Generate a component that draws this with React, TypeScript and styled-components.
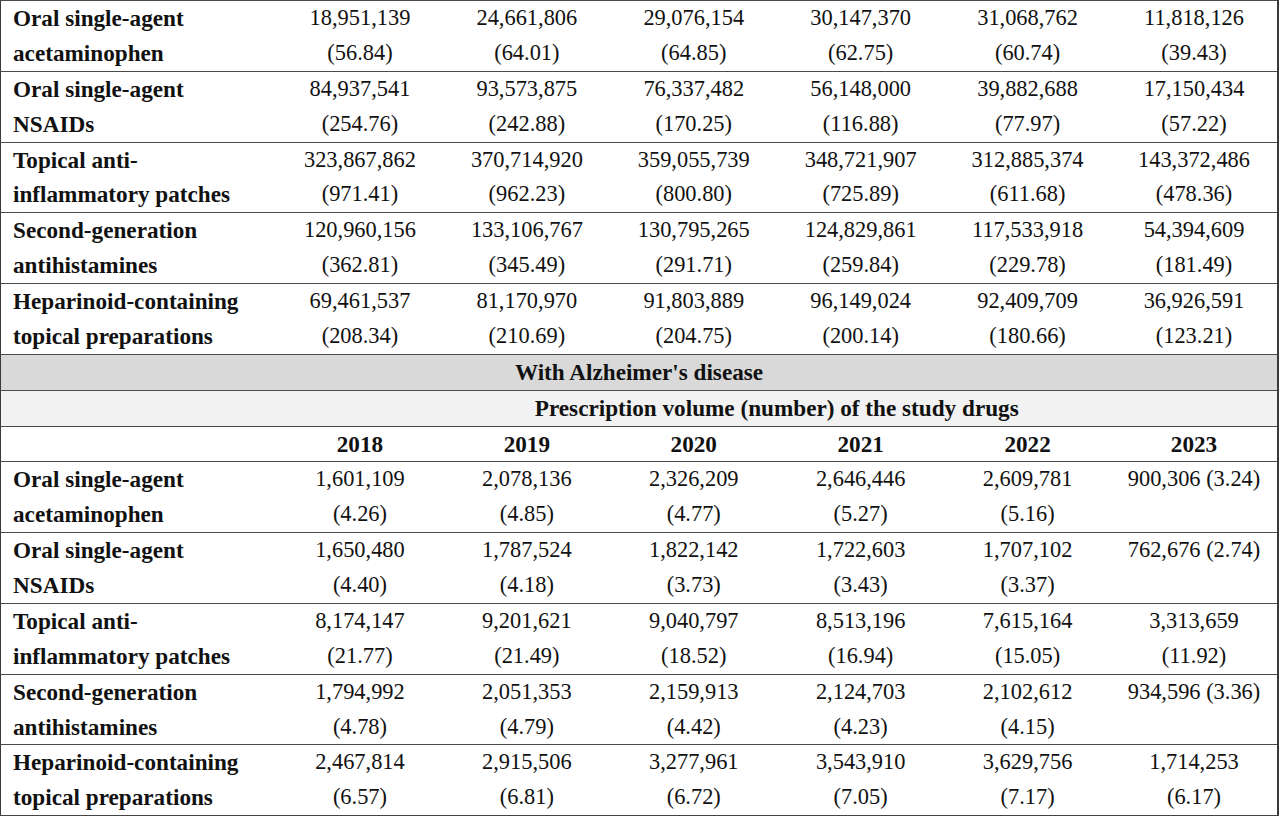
import React from "react";
import styled, { createGlobalStyle } from "styled-components";

const GlobalStyle = createGlobalStyle`
  html, body {
    margin: 0;
    padding: 0;
    background: #ffffff;
  }
  body {
    font-family: "Liberation Serif", "Times New Roman", serif;
    color: #111111;
  }
`;

const Table = styled.table`
  width: 1279px;
  table-layout: fixed;
  border-collapse: collapse;
  font-family: "Liberation Serif", "Times New Roman", serif;
  font-size: 22.4px;
  line-height: 34.87px;
  border-left: 1px solid #3a3a3a;
  border-right: 2px solid #3a3a3a;
  border-bottom: 1px solid #444444;
`;

const Row = styled.tr<{ $band?: "dark" | "light" }>`
  border-top: 1px solid #4a4a4a;
  background: ${(p) =>
    p.$band === "dark" ? "#d9d9d9" : p.$band === "light" ? "#f2f2f2" : "#ffffff"};
`;

const LabelCell = styled.td`
  padding: 0 12px;
  text-align: left;
  vertical-align: top;
  font-weight: 700;
  font-size: 23.2px;
  white-space: nowrap;
`;

const LabelLine = styled.span`
  display: block;
`;

const ValueCell = styled.td`
  padding: 0 11px;
  text-align: center;
  vertical-align: top;
  font-weight: 400;
`;

const HeadCell = styled.td`
  padding: 0 8px;
  text-align: center;
  vertical-align: top;
  font-weight: 700;
  font-size: 23.2px;
`;

type DrugRow = { label: [string, string]; values: string[] };

const general: DrugRow[] = [
  {
    label: ["Oral single-agent", "acetaminophen"],
    values: [
      "18,951,139 (56.84)",
      "24,661,806 (64.01)",
      "29,076,154 (64.85)",
      "30,147,370 (62.75)",
      "31,068,762 (60.74)",
      "11,818,126 (39.43)",
    ],
  },
  {
    label: ["Oral single-agent", "NSAIDs"],
    values: [
      "84,937,541 (254.76)",
      "93,573,875 (242.88)",
      "76,337,482 (170.25)",
      "56,148,000 (116.88)",
      "39,882,688 (77.97)",
      "17,150,434 (57.22)",
    ],
  },
  {
    label: ["Topical anti-", "inflammatory patches"],
    values: [
      "323,867,862 (971.41)",
      "370,714,920 (962.23)",
      "359,055,739 (800.80)",
      "348,721,907 (725.89)",
      "312,885,374 (611.68)",
      "143,372,486 (478.36)",
    ],
  },
  {
    label: ["Second-generation", "antihistamines"],
    values: [
      "120,960,156 (362.81)",
      "133,106,767 (345.49)",
      "130,795,265 (291.71)",
      "124,829,861 (259.84)",
      "117,533,918 (229.78)",
      "54,394,609 (181.49)",
    ],
  },
  {
    label: ["Heparinoid-containing", "topical preparations"],
    values: [
      "69,461,537 (208.34)",
      "81,170,970 (210.69)",
      "91,803,889 (204.75)",
      "96,149,024 (200.14)",
      "92,409,709 (180.66)",
      "36,926,591 (123.21)",
    ],
  },
];

const alzheimers: DrugRow[] = [
  {
    label: ["Oral single-agent", "acetaminophen"],
    values: [
      "1,601,109 (4.26)",
      "2,078,136 (4.85)",
      "2,326,209 (4.77)",
      "2,646,446 (5.27)",
      "2,609,781 (5.16)",
      "900,306 (3.24)",
    ],
  },
  {
    label: ["Oral single-agent", "NSAIDs"],
    values: [
      "1,650,480 (4.40)",
      "1,787,524 (4.18)",
      "1,822,142 (3.73)",
      "1,722,603 (3.43)",
      "1,707,102 (3.37)",
      "762,676 (2.74)",
    ],
  },
  {
    label: ["Topical anti-", "inflammatory patches"],
    values: [
      "8,174,147 (21.77)",
      "9,201,621 (21.49)",
      "9,040,797 (18.52)",
      "8,513,196 (16.94)",
      "7,615,164 (15.05)",
      "3,313,659 (11.92)",
    ],
  },
  {
    label: ["Second-generation", "antihistamines"],
    values: [
      "1,794,992 (4.78)",
      "2,051,353 (4.79)",
      "2,159,913 (4.42)",
      "2,124,703 (4.23)",
      "2,102,612 (4.15)",
      "934,596 (3.36)",
    ],
  },
  {
    label: ["Heparinoid-containing", "topical preparations"],
    values: [
      "2,467,814 (6.57)",
      "2,915,506 (6.81)",
      "3,277,961 (6.72)",
      "3,543,910 (7.05)",
      "3,629,756 (7.17)",
      "1,714,253 (6.17)",
    ],
  },
];

const years = ["2018", "2019", "2020", "2021", "2022", "2023"];

const DrugRows: React.FC<{ rows: DrugRow[]; section: string }> = ({ rows, section }) => (
  <>
    {rows.map((r) => (
      <Row key={section + r.label.join(" ")}>
        <LabelCell>
          <LabelLine>{r.label[0]}</LabelLine>
          <LabelLine>{r.label[1]}</LabelLine>
        </LabelCell>
        {r.values.map((v, i) => (
          <ValueCell key={i}>{v}</ValueCell>
        ))}
      </Row>
    ))}
  </>
);

export default function App() {
  return (
    <>
      <GlobalStyle />
      <Table>
        <colgroup>
          <col style={{ width: 276 }} />
          {years.map((y) => (
            <col key={y} />
          ))}
        </colgroup>
        <tbody>
          <DrugRows rows={general} section="all" />
          <Row $band="dark">
            <HeadCell colSpan={7}>With Alzheimer's disease</HeadCell>
          </Row>
          <Row $band="light">
            <HeadCell />
            <HeadCell colSpan={6}>Prescription volume (number) of the study drugs</HeadCell>
          </Row>
          <Row>
            <HeadCell />
            {years.map((y) => (
              <HeadCell key={y}>{y}</HeadCell>
            ))}
          </Row>
          <DrugRows rows={alzheimers} section="ad" />
        </tbody>
      </Table>
    </>
  );
}
